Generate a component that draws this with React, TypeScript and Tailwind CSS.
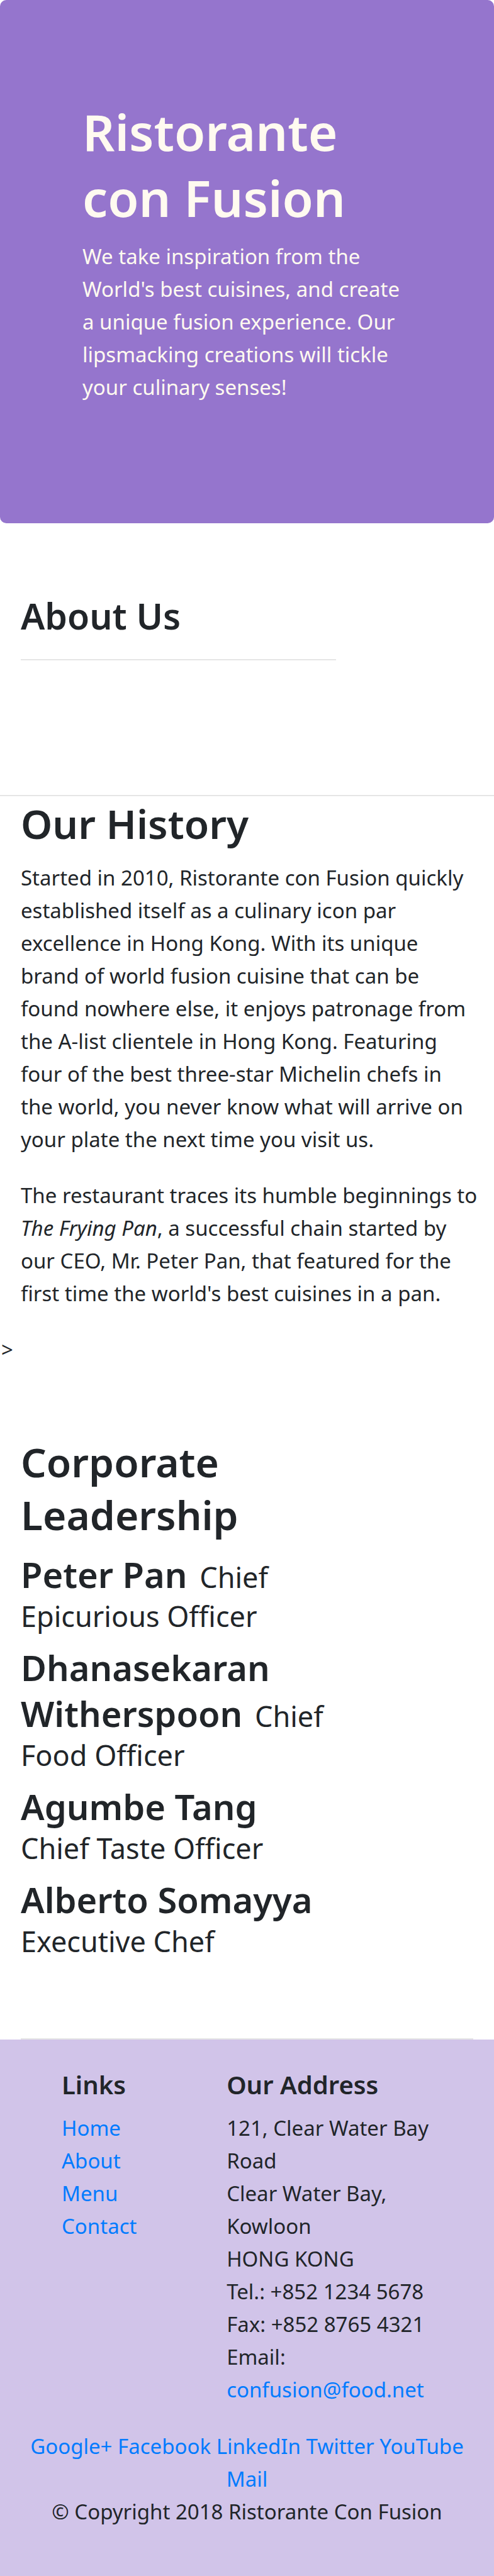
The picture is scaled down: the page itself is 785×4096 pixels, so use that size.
const leaders = [
  { name: "Peter Pan", role: "Chief Epicurious Officer" },
  { name: "Dhanasekaran Witherspoon", role: "Chief Food Officer" },
  { name: "Agumbe Tang", role: "Chief Taste Officer" },
  { name: "Alberto Somayya", role: "Executive Chef" },
];

const pages = ["Home", "About", "Menu", "Contact"];
const social = ["Google+", "Facebook", "LinkedIn", "Twitter", "YouTube", "Mail"];

function Hero() {
  return (
    <header className="rounded-[10px] bg-[#9575cd] px-[131px] pt-[156px] pb-[190px] text-[#fffaf0]">
      <h1 className="text-[80px] leading-[105px] font-semibold">Ristorante con Fusion</h1>
      <p className="mt-4">
        We take inspiration from the World's best cuisines, and create a unique fusion experience. Our
        lipsmacking creations will tickle your culinary senses!
      </p>
    </header>
  );
}

function History() {
  return (
    <section className="border-t-2 border-black/10 pt-[2px] pr-5 pl-[33px]">
      <h2 className="text-[64px] leading-[84px] font-semibold">Our History</h2>
      <p className="mt-[18px] pr-3">
        Started in 2010, Ristorante con Fusion quickly established itself as a culinary icon par
        excellence in Hong Kong. With its unique brand of world fusion cuisine that can be found nowhere
        else, it enjoys patronage from the A-list clientele in Hong Kong. Featuring four of the best
        three-star Michelin chefs in the world, you never know what will arrive on your plate the next
        time you visit us.
      </p>
      <p className="mt-[37px]">
        The restaurant traces its humble beginnings to <em>The Frying Pan</em>, a successful chain
        started by our CEO, Mr. Peter Pan, that featured for the first time the world's best cuisines in
        a pan.
      </p>
    </section>
  );
}

function Leadership() {
  return (
    <section className="w-[68%] pt-[111px] pb-[125px] pl-[33px]">
      <h2 className="text-[64px] leading-[84px] font-semibold">Corporate Leadership</h2>
      {leaders.map((l) => (
        <h3 key={l.name} className="mt-4 text-[45px] leading-[59px]">
          <span className="mr-2 text-[56px] leading-[73px] font-semibold">{l.name}</span> {l.role}
        </h3>
      ))}
    </section>
  );
}

function Footer() {
  return (
    <footer className="bg-[#d1c4e9] px-[33px] pt-[46px] pb-[76px]">
      <div className="flex">
        <nav aria-labelledby="links" className="w-[45.5%] pl-[65px]">
          <h5 id="links" className="text-[40px] leading-[52px] font-semibold">Links</h5>
          <ul className="mt-[17px]">
            {pages.map((p) => (
              <li key={p}>
                <a href="#" className="text-[#007bff]">{p}</a>
              </li>
            ))}
          </ul>
        </nav>
        <div className="flex-1 pr-8">
          <h5 className="text-[40px] leading-[52px] font-semibold">Our Address</h5>
          <address className="mt-[17px] not-italic">
            121, Clear Water Bay Road
            <br />
            Clear Water Bay, Kowloon
            <br />
            HONG KONG
            <br />
            Tel.: +852 1234 5678
            <br />
            Fax: +852 8765 4321
            <br />
            Email: <a href="mailto:confusion@food.net" className="text-[#007bff]">confusion@food.net</a>
          </address>
        </div>
      </div>
      <div className="mt-[38px] text-center">
        {social.map((s) => (
          <span key={s}>
            <a href="#" className="text-[#007bff]">{s}</a>{" "}
          </span>
        ))}
      </div>
      <p className="text-center">© Copyright 2018 Ristorante Con Fusion</p>
    </footer>
  );
}

export default function App() {
  return (
    <div className="bg-white font-['Noto_Sans','Open_Sans',sans-serif] text-[33px] leading-[52px] text-[#212529]">
      <Hero />
      <section className="w-[68%] pt-[111px] pb-[214px] pl-[33px]">
        <h3 className="text-[57px] leading-[73px] font-semibold">About Us</h3>
        <hr className="mt-8 border-t-2 border-black/10" />
      </section>
      <History />
      <p className="mt-[37px] pl-[2px]">&gt;</p>
      <Leadership />
      <hr className="mx-[33px] border-t-2 border-black/10" />
      <Footer />
    </div>
  );
}
